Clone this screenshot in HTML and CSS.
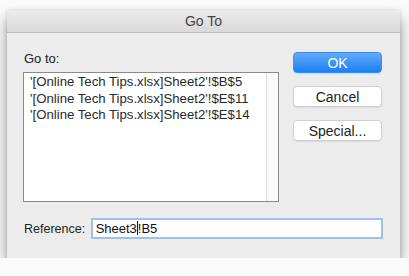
FILE: index.html
```html
<!DOCTYPE html>
<html lang="en">
<head>
  <meta charset="UTF-8" />
  <meta name="viewport" content="width=device-width, initial-scale=1" />
  <title>Go To</title>
  <link rel="stylesheet" href="styles.css">
</head>
<body>
  <div class="dialog">
    <div class="titlebar">Go To</div>
    <div class="content">
      <div class="main">
        <div class="left">
          <div class="label">Go to:</div>
          <div class="listbox">
            <ul class="items">
              <li>'[Online Tech Tips.xlsx]Sheet2'!$B$5</li>
              <li>'[Online Tech Tips.xlsx]Sheet2'!$E$11</li>
              <li>'[Online Tech Tips.xlsx]Sheet2'!$E$14</li>
            </ul>
            <div class="scroll-track"></div>
          </div>
        </div>
        <div class="buttons">
          <button class="primary">OK</button>
          <button>Cancel</button>
          <button>Special...</button>
        </div>
      </div>
      <div class="ref-row">
        <label class="ref-label" for="ref">Reference:</label>
        <div class="ref-input" id="ref">Sheet3<span class="caret"></span>!B5</div>
      </div>
    </div>
  </div>
</body>
</html>
```

FILE: styles.css
```css
body {
  margin: 0;
  background: #fbfbfb;
  font-family: 'Liberation Sans', Arial, sans-serif;
  font-size: 13px;
  color: #222;
}

.dialog {
  margin: 10px 9px 0 7px;
  width: 393px;
  height: 248px;
  background: #ececec;
  box-shadow: 0 9px 14px rgba(0,0,0,0.4), 0 0 3px rgba(0,0,0,0.15);
  display: flex;
  flex-direction: column;
}

.titlebar {
  height: 22px;
  line-height: 23px;
  text-align: center;
  font-size: 14px;
  color: #444;
  background: linear-gradient(#ebebeb, #d9d9d9);
  border-bottom: 1px solid #bdbdbd;
}

.content {
  flex: 1;
  padding: 18px 17px 0 16px;
}

.main {
  display: flex;
  gap: 14px;
}

.left {
  width: 256px;
}

.label {
  line-height: 16px;
  padding-left: 1px;
  margin-bottom: 5px;
}

.listbox {
  height: 128px;
  background: #fff;
  border: 1px solid #8a8a8a;
  display: flex;
}

.items {
  flex: 1;
  list-style: none;
  margin: 0;
  padding: 1px 0 0 6px;
  color: #2a2a2a;
}

.items li {
  line-height: 16.5px;
  font-size: 13.2px;
}

.scroll-track {
  width: 11px;
  background: #fafafa;
  border-left: 1px solid #dcdcdc;
}

.buttons {
  width: 89px;
  display: flex;
  flex-direction: column;
  gap: 13px;
  padding-top: 1px;
}

button {
  height: 21px;
  padding: 0;
  font-family: inherit;
  font-size: 14px;
  color: #222;
  background: #fff;
  border: 1px solid #d0d0d0;
  border-radius: 4px;
  box-shadow: 0 1px 1px rgba(0,0,0,0.08);
}

button.primary {
  color: #fff;
  background: linear-gradient(#63abf9, #1b7ff5);
  border-color: #3a8ef2;
}

.ref-row {
  display: flex;
  align-items: center;
  margin-top: 16px;
}

.ref-label {
  width: 67px;
  padding-left: 1px;
  font-size: 12.5px;
  color: #222;
}

.ref-input {
  width: 284px;
  height: 17px;
  line-height: 17px;
  padding: 0 3px;
  background: #fff;
  border: 2px solid #9fc1e8;
  font-size: 13px;
  color: #111;
}

.caret {
  display: inline-block;
  width: 1px;
  height: 14px;
  vertical-align: -2px;
  background: #111;
}
```
